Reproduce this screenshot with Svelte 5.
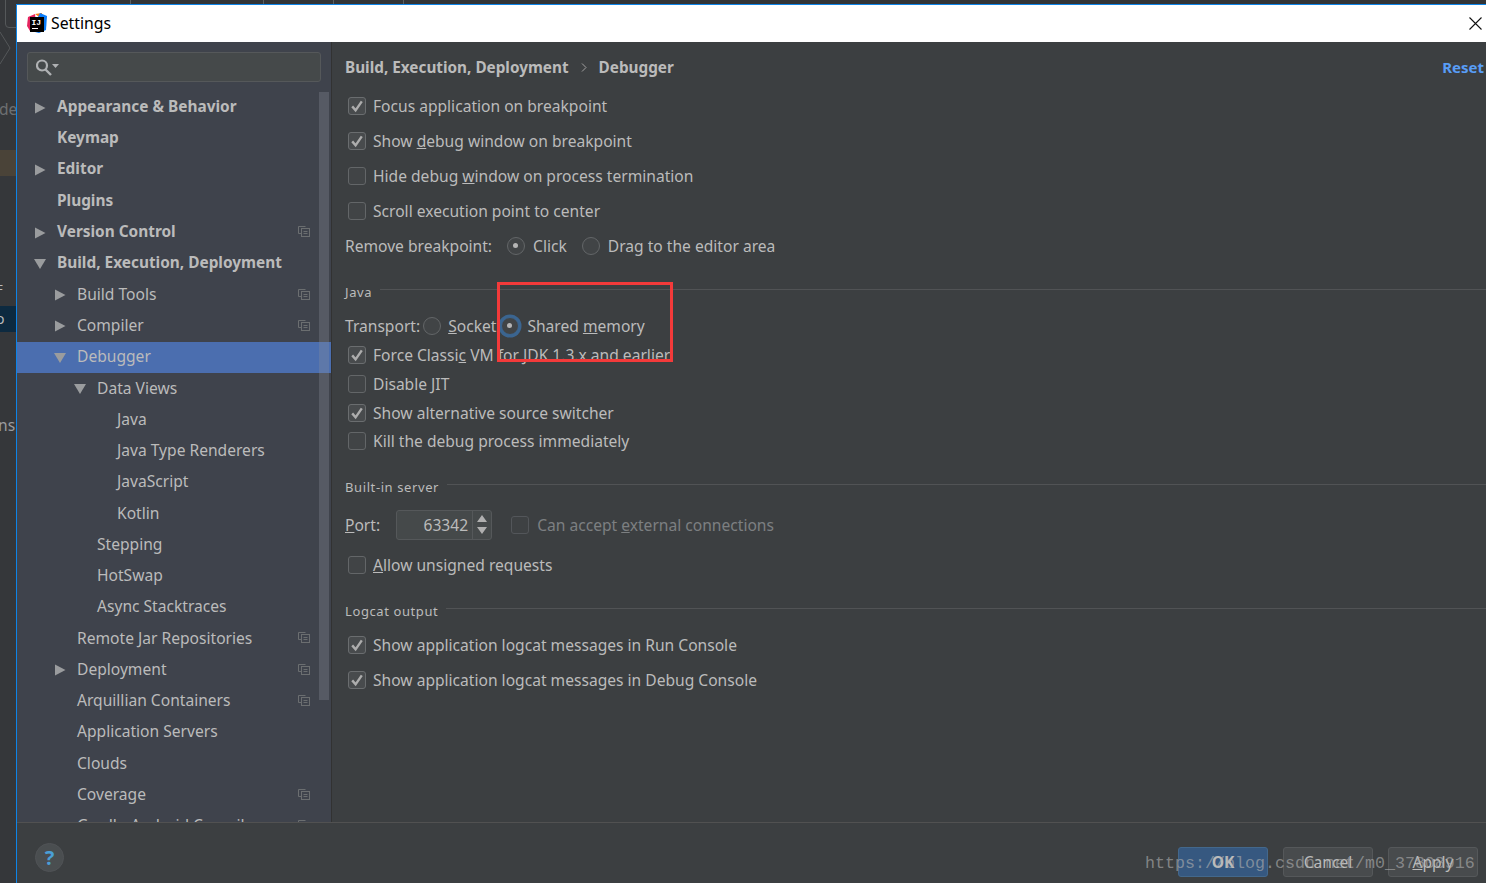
<script>
  const tree = [
    { label: 'Appearance & Behavior', depth: 0, arrow: 'right', bold: true },
    { label: 'Keymap', depth: 0, bold: true },
    { label: 'Editor', depth: 0, arrow: 'right', bold: true },
    { label: 'Plugins', depth: 0, bold: true },
    { label: 'Version Control', depth: 0, arrow: 'right', bold: true, copy: true },
    { label: 'Build, Execution, Deployment', depth: 0, arrow: 'down', bold: true },
    { label: 'Build Tools', depth: 1, arrow: 'right', copy: true },
    { label: 'Compiler', depth: 1, arrow: 'right', copy: true },
    { label: 'Debugger', depth: 1, arrow: 'down', selected: true },
    { label: 'Data Views', depth: 2, arrow: 'down' },
    { label: 'Java', depth: 3 },
    { label: 'Java Type Renderers', depth: 3 },
    { label: 'JavaScript', depth: 3 },
    { label: 'Kotlin', depth: 3 },
    { label: 'Stepping', depth: 2 },
    { label: 'HotSwap', depth: 2 },
    { label: 'Async Stacktraces', depth: 2 },
    { label: 'Remote Jar Repositories', depth: 1, copy: true },
    { label: 'Deployment', depth: 1, arrow: 'right', copy: true },
    { label: 'Arquillian Containers', depth: 1, copy: true },
    { label: 'Application Servers', depth: 1 },
    { label: 'Clouds', depth: 1 },
    { label: 'Coverage', depth: 1, copy: true },
    { label: 'Gradle-Android Compiler', depth: 1, copy: true }
  ];
</script>

{#snippet check(on, dim)}
  <span class={['box', { on, dim }]}>
    {#if on}
      <svg width="14" height="14" viewBox="0 0 14 14"><path d="M2.2 7.4 5.6 11.4 11.8 2.4" fill="none" stroke="#adadad" stroke-width="2.4" /></svg>
    {/if}
  </span>
{/snippet}

{#snippet copyIcon()}
  <svg class="copy" width="12" height="12" viewBox="0 0 12 12" fill="none" stroke="#6b6e70">
    <path d="M7.5 1.5H.5V8.5H3" />
    <rect x="3.5" y="3.5" width="8" height="8" />
    <path d="M5.5 6.5h4M5.5 8.5h4" />
  </svg>
{/snippet}

<div class="screen">
  <div class="backdrop">
    <div class="peek peek-tab"></div>
    <svg class="peek peek-chevron" width="11" height="32" viewBox="0 0 11 32"><path d="M0 0 10 16 0 32" fill="none" stroke="#55585a" /></svg>
    <span class="peek peek-de">de</span>
    <div class="peek peek-amber"></div>
    <span class="peek peek-f">F</span>
    <span class="peek peek-o">o</span>
    <span class="peek peek-ns">ns</span>
  </div>
  <div class="seams"><i></i><i></i><i></i><i></i></div>

  <div class="window">
    <div class="titlebar">
      <svg class="logo" width="20" height="21" viewBox="0 0 20 21">
        <path d="M1 4 8 1 9 10 3 18 0 13Z" fill="#e5245f" />
        <path d="M8 1 15 0 15 6Z" fill="#f97a12" />
        <path d="M13 0 20 3 19 17 12 20 4 18Z" fill="#087cfa" />
        <rect x="3" y="4" width="14" height="15" fill="#000" />
        <text x="4.5" y="12" class="logo-text">IJ</text>
        <rect x="5" y="15" width="6" height="1" fill="#fff" />
      </svg>
      <span class="title">Settings</span>
      <svg class="close" width="13" height="13" viewBox="0 0 13 13"><path d="M.5.5 12.5 12.5M12.5.5.5 12.5" stroke="#111" stroke-width="1.1" /></svg>
    </div>

    <div class="main">
      <aside class="sidebar">
        <div class="search">
          <svg width="23" height="17" viewBox="0 0 23 17" fill="none">
            <circle cx="6" cy="6.5" r="5" stroke="#afb1b3" stroke-width="2.2" />
            <path d="M9.5 10.5 15 16" stroke="#afb1b3" stroke-width="2.4" />
            <path d="M16 5h7l-3.5 4z" fill="#afb1b3" />
          </svg>
        </div>
        <div class="tree">
          <div class="scrollbar"></div>
          {#each tree as item}
            <div class={['node', { selected: item.selected, bold: item.bold }]} style="padding-left: {18 + item.depth * 20}px">
              <span class="arrow">
                {#if item.arrow === 'right'}
                  <svg width="12" height="12" viewBox="0 0 12 12"><path d="M0 .5 10.5 6 0 11.5z" fill="#9a9c9e" /></svg>
                {:else if item.arrow === 'down'}
                  <svg class="down" width="12" height="12" viewBox="0 0 12 12"><path d="M0 1H12L6 11z" fill="#9a9c9e" /></svg>
                {/if}
              </span>
              <span class="node-label">{item.label}</span>
              {#if item.copy}{@render copyIcon()}{/if}
            </div>
          {/each}
        </div>
      </aside>

      <section class="content">
        <header class="crumbs">
          <span>Build, Execution, Deployment</span>
          <svg width="6" height="9" viewBox="0 0 6 9"><path d="M1 .5 5 4.5 1 8.5" fill="none" stroke="#a0a0a0" /></svg>
          <span>Debugger</span>
          <span class="reset">Reset</span>
        </header>

        <div class="wide">
          <label class="row">{@render check(true)}<span>Focus application on breakpoint</span></label>
          <label class="row">{@render check(true)}<span>Show <u>d</u>ebug window on breakpoint</span></label>
          <label class="row">{@render check(false)}<span>Hide debug <u>w</u>indow on process termination</span></label>
          <label class="row">{@render check(false)}<span>Scroll execution point to center</span></label>
          <div class="row plain">
            <span class="remove-label">Remove breakpoint:</span>
            <span class="radio on"></span><span class="radio-text">Click</span>
            <span class="radio drag"></span><span class="radio-text">Drag to the editor area</span>
          </div>
        </div>

        <div class="legend first"><span>Java</span><i></i></div>
        <div class="transport">
          <span>Transport:</span>
          <span class="radio"></span><span class="socket"><u>S</u>ocket</span>
          <span class="radio on focus"></span><span>Shared <u>m</u>emory</span>
        </div>
        <div class="tight">
          <label class="row">{@render check(true)}<span>Force Classi<u>c</u> VM for JDK 1.3.x and earlier</span></label>
          <label class="row">{@render check(false)}<span>Disable JIT</span></label>
          <label class="row">{@render check(true)}<span>Show alternative source switcher</span></label>
          <label class="row">{@render check(false)}<span>Kill the debug process immediately</span></label>
        </div>

        <div class="legend server"><span>Built-in server</span><i></i></div>
        <div class="port-row">
          <span><u>P</u>ort:</span>
          <div class="spinner">
            <span class="spin-value">63342</span>
            <span class="spin-btns">
              <svg width="10" height="19" viewBox="0 0 10 19"><path d="M5 0 10 7H0zM0 12H10L5 19z" fill="#b0b0b0" /></svg>
            </span>
          </div>
          {@render check(false, true)}
          <span class="muted">Can accept <u>e</u>xternal connections</span>
        </div>
        <label class="row unsigned">{@render check(false)}<span><u>A</u>llow unsigned requests</span></label>

        <div class="legend logcat"><span>Logcat output</span><i></i></div>
        <div class="wide">
          <label class="row">{@render check(true)}<span>Show application logcat messages in Run Console</span></label>
          <label class="row">{@render check(true)}<span>Show application logcat messages in Debug Console</span></label>
        </div>
      </section>
    </div>

    <footer class="footer">
      <span class="help">?</span>
      <div class="buttons">
        <button class="btn primary">OK</button>
        <button class="btn">Cancel</button>
        <button class="btn"><u>A</u>pply</button>
      </div>
    </footer>
  </div>

  <div class="annotation"></div>
  <div class="watermark">https://blog.csdn.net/m0_37808916</div>
</div>

<style>
  :global(body) {
    margin: 0;
    background: #333537;
  }

  .screen {
    position: relative;
    display: flex;
    width: 1486px;
    height: 883px;
    overflow: hidden;
    font-family: "Noto Sans", sans-serif;
    font-size: 15.6px;
    color: #bbbbbb;
    background: #333537;
  }

  .backdrop {
    position: relative;
    flex: 0 0 16px;
    overflow: hidden;
    background: #35373a;
  }

  .peek {
    position: absolute;
  }

  .peek-tab {
    left: 5px;
    top: -6px;
    width: 30px;
    height: 32px;
    border: 1px solid #55585a;
    border-radius: 4px;
  }

  .peek-chevron {
    left: 0;
    top: 32px;
  }

  .peek-de {
    left: -1px;
    top: 98px;
    color: #6d6f71;
  }

  .peek-amber {
    left: 0;
    top: 150px;
    width: 16px;
    height: 26px;
    background: #4a4338;
  }

  .peek-f {
    left: -4px;
    top: 280px;
    font-size: 13px;
  }

  .peek-o {
    left: 0;
    top: 306px;
    width: 16px;
    height: 26px;
    line-height: 26px;
    background: #0d2a40;
    font-size: 14px;
    text-indent: -4px;
  }

  .peek-ns {
    left: -2px;
    top: 414px;
    color: #9a9c9e;
  }

  .seams {
    position: absolute;
    left: 130px;
    top: 0;
    display: flex;
  }

  .seams i {
    width: 1px;
    height: 4px;
    margin-right: 69px;
    background: #5c5f61;
  }

  .seams i:first-child {
    margin-right: 132px;
  }

  .window {
    flex: 1;
    display: flex;
    flex-direction: column;
    margin-top: 4px;
    min-width: 0;
    border-top: 1px solid #0d84e8;
    border-left: 1px solid #0d84e8;
    background: #3c3f41;
  }

  .titlebar {
    flex: 0 0 37px;
    display: flex;
    align-items: center;
    background: #fff;
    color: #000;
    padding: 0 4px 0 10px;
  }

  .logo {
    margin-right: 4px;
    margin-top: -1px;
  }

  .logo-text {
    font: bold 8px "Liberation Mono", monospace;
    fill: #fff;
  }

  .title {
    font-size: 15.8px;
    margin-top: -1px;
  }

  .close {
    margin-left: auto;
    margin-top: -1px;
  }

  .main {
    flex: 1;
    display: flex;
    min-height: 0;
  }

  .sidebar {
    flex: 0 0 315px;
    box-sizing: border-box;
    display: flex;
    flex-direction: column;
    background: #3f434c;
    border-right: 1px solid #323232;
    overflow: hidden;
  }

  .search {
    display: flex;
    align-items: center;
    height: 28px;
    margin: 10px 10px 0;
    padding-left: 8px;
    background: #45494a;
    border: 1px solid #55585a;
    border-radius: 3px;
    flex: none;
  }

  .tree {
    position: relative;
    padding-top: 10px;
    flex: 1;
  }

  .scrollbar {
    position: absolute;
    z-index: 1;
    right: 2px;
    top: 10px;
    width: 10px;
    height: 608px;
    background: rgba(140, 145, 155, 0.3);
  }

  .node {
    display: flex;
    align-items: center;
    height: 31.25px;
    white-space: nowrap;
  }

  .node.bold {
    font-weight: 700;
    font-size: 15.4px;
  }

  .node.selected {
    background: #4b6eaf;
  }

  .node-label {
    margin-top: -2.5px;
  }

  .arrow {
    flex: 0 0 22px;
    display: flex;
    align-items: center;
  }

  .arrow .down {
    margin-left: -1px;
  }

  .copy {
    position: absolute;
    left: 281px;
    margin-top: -3px;
  }

  .content {
    flex: 1;
    min-width: 0;
    padding-left: 13px;
    overflow: hidden;
  }

  .crumbs {
    display: flex;
    align-items: center;
    height: 50px;
    font-weight: 700;
    font-size: 15.3px;
    gap: 12px;
    margin-bottom: -4px;
  }

  .reset {
    margin-left: auto;
    margin-right: 2px;
    font-size: 15px;
    color: #589df6;
  }

  .wide {
    display: flex;
    flex-direction: column;
  }

  .wide .row {
    height: 35px;
  }

  .tight .row {
    height: 28.7px;
  }

  .row {
    display: flex;
    align-items: center;
    padding-left: 3px;
    gap: 7px;
  }

  .row.plain {
    padding-left: 0;
    gap: 0;
  }

  .remove-label {
    margin-right: 15px;
  }

  .radio-text {
    margin-left: 8px;
  }

  .radio.drag {
    margin-left: 15px;
  }

  .box {
    flex: none;
    display: flex;
    align-items: center;
    justify-content: center;
    box-sizing: border-box;
    width: 18px;
    height: 18px;
    border: 1.5px solid #636668;
    border-radius: 3px;
    background: #414446;
  }

  .box.on {
    background: #484b4d;
    border-color: #6a6d6f;
  }

  .box.dim {
    border-color: #53565a;
    background: #3e4143;
  }

  .radio {
    position: relative;
    flex: none;
    box-sizing: border-box;
    width: 18px;
    height: 18px;
    border: 1.5px solid #636668;
    border-radius: 50%;
    background: #414446;
  }

  .radio.on::after {
    content: '';
    position: absolute;
    left: 5px;
    top: 5px;
    width: 5px;
    height: 5px;
    border-radius: 50%;
    background: #b5b5b5;
  }

  .radio.focus {
    border-color: #3b6590;
    box-shadow: 0 0 0 2.5px #3b6590;
  }

  .legend {
    display: flex;
    gap: 8px;
    font-size: 13px;
    letter-spacing: 0.6px;
    line-height: 18px;
  }

  .legend span {
    flex: none;
  }

  .legend i {
    flex: 1;
    height: 1px;
    margin-top: 6px;
    background: #515355;
  }

  .legend.first {
    margin-top: 20px;
  }

  .transport {
    display: flex;
    align-items: center;
    height: 30px;
    margin-top: 10px;
    gap: 0;
  }

  .transport .radio {
    margin: 0 7px 0 3px;
  }

  .transport .radio.focus {
    margin: 0 8px 0 5px;
  }

  .legend.server {
    margin-top: 22px;
  }

  .port-row {
    display: flex;
    align-items: center;
    height: 30px;
    margin-top: 14px;
  }

  .spinner {
    display: flex;
    align-items: center;
    box-sizing: border-box;
    width: 96px;
    height: 30px;
    margin: 0 19px 0 16px;
    border: 1px solid #55585a;
    border-radius: 3px;
    background: #45494a;
  }

  .spin-value {
    flex: 1;
    text-align: right;
    padding-right: 4px;
  }

  .spin-btns {
    flex: 0 0 18px;
    align-self: stretch;
    display: flex;
    align-items: center;
    justify-content: center;
    border-left: 1px solid #55585a;
  }

  .muted {
    margin-left: 8px;
    color: #7c7f81;
  }

  .row.unsigned {
    height: 30px;
    margin-top: 10px;
  }

  .legend.logcat {
    margin-top: 22px;
    margin-bottom: 8px;
  }

  .footer {
    flex: 0 0 60px;
    display: flex;
    align-items: center;
    padding: 0 8px 0 18px;
    border-top: 1px solid #515151;
    background: #3c3f41;
  }

  .help {
    display: flex;
    align-items: center;
    justify-content: center;
    box-sizing: border-box;
    width: 29px;
    height: 29px;
    margin-top: 8px;
    border: 1px solid #505356;
    border-radius: 50%;
    background: #4a4e50;
    color: #4a9fd6;
    font-size: 20px;
    font-weight: 700;
  }

  .buttons {
    display: flex;
    gap: 15px;
    margin-left: auto;
    margin-top: 18px;
  }

  .btn {
    box-sizing: border-box;
    width: 90px;
    height: 30px;
    padding: 0;
    border: 1px solid #55585a;
    border-radius: 3px;
    background: #484b4d;
    color: #bbbbbb;
    font: 15.6px "Noto Sans", sans-serif;
  }

  .btn.primary {
    background: #365880;
    border-color: #43688c;
    font-weight: 700;
  }

  .annotation {
    position: absolute;
    left: 497px;
    top: 282px;
    box-sizing: border-box;
    width: 176px;
    height: 80px;
    border: 3px solid #f33a3a;
  }

  .watermark {
    position: absolute;
    left: 1145px;
    top: 854px;
    font: 16.67px/20px "Liberation Mono", monospace;
    color: rgba(175, 175, 175, 0.62);
    white-space: nowrap;
  }
</style>
